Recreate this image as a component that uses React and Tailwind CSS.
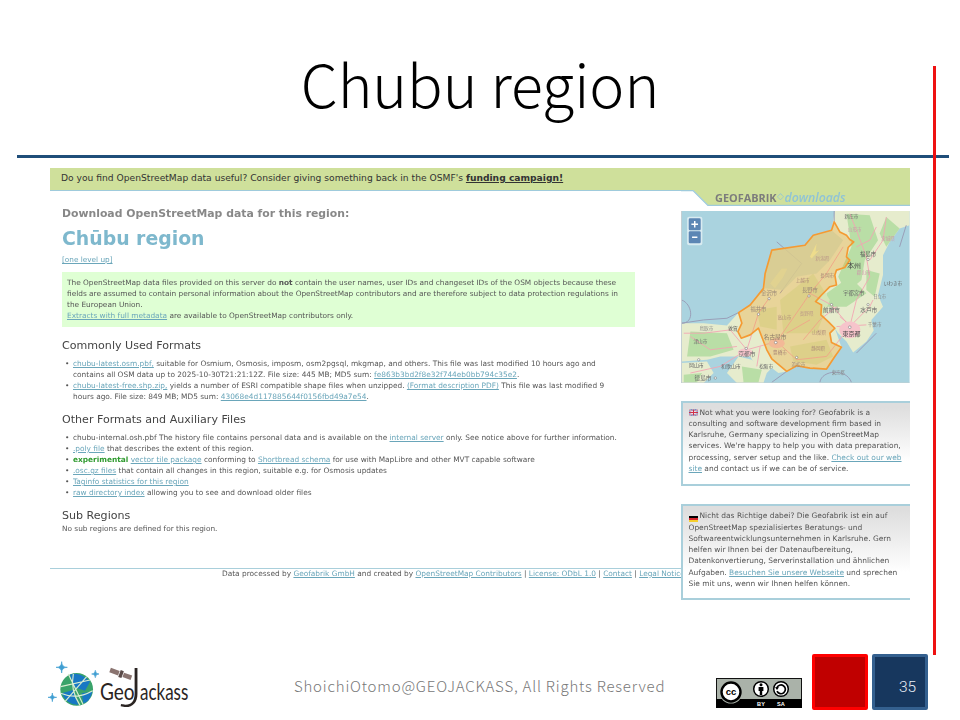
import React from 'react';

const Link = ({ children }) => <span className="text-[#6aa6ba] underline">{children}</span>;

const BORDER = '493,185 510,215 530,225 540,238 552,245 535,262 530,290 540,300 525,322 500,330 495,345 500,375 480,380 455,405 437,425 455,435 453,465 475,485 495,505 480,520 485,548 515,562 495,590 470,628 420,625 380,618 350,635 305,597 290,570 265,505 240,525 213,535 203,515 215,490 205,458 240,435 280,385 285,340 305,270 405,255 430,225 485,210';

const mapLabels = [
  ['福島市', 595, 284, 16, '#555'],
  ['本州', 553, 319, 21, '#444'],
  ['新潟県', 458, 295, 14, '#b98'],
  ['長岡市', 472, 347, 14, '#a87'],
  ['宇都宮市', 552, 401, 16, '#666'],
  ['いわき市', 670, 371, 14, '#666'],
  ['郡山市', 582, 339, 14, '#c9a'],
  ['上越市', 398, 362, 14, '#a87'],
  ['長野市', 420, 391, 16, '#987'],
  ['金沢市', 297, 400, 16, '#987'],
  ['福井市', 265, 450, 16, '#987'],
  ['高山市', 343, 474, 14, '#a87'],
  ['長野県', 410, 461, 14, '#b98'],
  ['前橋市', 485, 453, 17, '#666'],
  ['水戸市', 597, 453, 17, '#666'],
  ['山梨県', 448, 520, 14, '#a87'],
  ['東京都', 545, 523, 18, '#444'],
  ['千葉市', 615, 494, 14, '#888'],
  ['名古屋市', 315, 533, 17, '#876'],
  ['静岡県', 445, 566, 14, '#a87'],
  ['豊橋市', 330, 580, 14, '#a87'],
  ['浜松市', 385, 614, 14, '#987'],
  ['京都市', 230, 585, 17, '#666'],
  ['敦賀', 188, 508, 14, '#555'],
  ['鳥取市', 108, 506, 14, '#888'],
  ['津山市', 90, 546, 14, '#666'],
  ['岡山市', 78, 618, 15, '#666'],
  ['和歌山市', 182, 621, 15, '#666'],
  ['松阪市', 288, 621, 14, '#666'],
  ['徳島市', 98, 656, 17, '#666'],
  ['東京都', 505, 639, 13, '#888'],
  ['山形市', 555, 208, 14, '#c9a'],
  ['新庄市', 545, 168, 14, '#666'],
  ['宮城県', 655, 236, 14, '#c9a'],
  ['日立市', 630, 411, 13, '#888'],
];

const roads = [
  'M540 160 L560 210 L590 290 L600 350 L560 420 L540 500',
  'M650 170 L640 240 L600 300',
  'M540 500 L600 440 L610 420',
  'M540 500 L485 435 L420 400 L400 430 L320 545',
  'M320 545 L230 570 L150 620 L60 640',
  'M320 545 L380 600 L470 590 L540 500',
  'M230 570 L180 510 L100 520 L40 520',
  'M420 400 L470 340 L520 260',
  'M300 410 L265 460 L230 570',
  'M510 470 L570 520 M500 500 L590 495',
  'M620 200 L600 240 L560 260 M500 440 L450 480 L400 540',
  'M60 530 L120 570 L200 560 M270 560 L260 620 M350 520 L420 480',
];

const ChubuMap = () => (
  <svg viewBox="33 152 687 518" className="block w-[229px] h-[172px]" style={{ fontFamily: '"Noto Sans CJK JP", sans-serif' }}>
    <rect x="33" y="152" width="687" height="518" fill="#aad3df" />
    <path d="M495 152 L720 152 L720 195 L690 205 L660 245 L640 285 L640 345 L625 405 L640 440 L605 480 L612 512 L590 545 L550 578 L530 545 L505 520 L495 505 L515 562 L495 590 L470 628 L420 625 L380 618 L350 635 L325 640 L305 625 L290 640 L270 640 L240 590 L200 590 L150 590 L110 600 L33 605 L33 490 L100 490 L170 497 L205 458 L240 435 L280 385 L285 340 L305 270 L405 255 L430 225 L485 210 Z" fill="#e6eccd" />
    <path d="M33 610 L110 605 L130 640 L100 670 L33 670 Z" fill="#e6eccd" />
    <path d="M205 590 L245 600 L290 640 L280 670 L200 670 L170 640 Z" fill="#e6eccd" />
    <g fill="#b9dea6">
      <path d="M530 160 L600 165 L625 240 L585 300 L575 360 L530 400 L505 350 L545 260 Z" />
      <path d="M650 170 L690 205 L650 260 L630 220 Z" />
      <path d="M590 330 L630 340 L615 410 L590 390 Z" />
      <path d="M60 515 L170 520 L190 570 L120 590 L50 590 Z" />
      <path d="M215 620 L275 630 L265 668 L220 668 Z" />
      <path d="M40 645 L95 640 L80 668 L40 668 Z" />
      <path d="M470 400 L540 350 L590 400 L530 440 L470 440 Z" />
    </g>
    <g fill="#d6e6b6">
      <path d="M330 420 L430 340 L480 420 L440 520 L340 520 Z" />
      <path d="M260 450 L320 440 L320 510 L270 500 Z" />
      <path d="M360 560 L470 540 L490 590 L440 615 L370 605 Z" />
    </g>
    <g fill="none" stroke="#f3a3b3" strokeWidth="2.6">
      {roads.map((d) => <path key={d} d={d} />)}
    </g>
    <g fill="#f6c4cb">
      <ellipse cx="540" cy="510" rx="32" ry="25" />
      <ellipse cx="320" cy="550" rx="24" ry="15" />
      <ellipse cx="225" cy="578" rx="22" ry="12" />
    </g>
    <path d="M493 152 L493 185 M710 195 L690 260 M33 490 C75 490 65 430 33 420 M33 490 L100 480 L170 475 L205 458 M305 668 L350 635 M450 668 C455 630 530 625 545 668 M560 580 L620 520 M320 245 L395 310 L330 400" fill="none" stroke="#9a9fb8" strokeWidth="3" />
    <polygon points={BORDER} fill="#eda12c" fillOpacity="0.32" />
    <path d="M305 270 L405 255 L430 225 L485 210 L520 240 L480 300 L440 340 L380 350 L340 390 L285 385 L285 340 Z" fill="#d6cb93" opacity="0.85" />
    <polygon points={BORDER} fill="none" stroke="#f59a32" strokeWidth="5" strokeLinejoin="round" />
    <path d="M420 290 L440 250 L437 275 L448 270 L425 295 Z" fill="#f2e08a" opacity="0.8" />
    <path d="M300 370 L335 325 L352 325 L340 350 L315 385 Z" fill="#e6d58e" opacity="0.6" />
    {mapLabels.map(([label, x, y, size, color]) => (
      <text key={label + x} x={x} y={y} fontSize={size} fill={color} textAnchor="middle" dominantBaseline="middle">{label}</text>
    ))}
    <g fill="#fff" stroke="#666" strokeWidth="1.5">
      <circle cx="595" cy="298" r="3.5" />
      <circle cx="417" cy="408" r="3.5" />
      <circle cx="485" cy="434" r="3.5" />
      <circle cx="595" cy="434" r="3.5" />
      <circle cx="297" cy="416" r="3.5" />
      <circle cx="265" cy="463" r="3.5" />
      <circle cx="317" cy="548" r="4" />
      <circle cx="228" cy="566" r="3.5" />
      <circle cx="540" cy="502" r="4" />
      <circle cx="85" cy="600" r="3.5" />
      <circle cx="135" cy="655" r="3.5" />
      <circle cx="380" cy="593" r="3.5" />
    </g>
    <path d="M33 152 V670 H720" fill="none" stroke="#c4cfd2" strokeWidth="3" />
    <rect x="50" y="169" width="46" height="86" rx="6" fill="#fff" fillOpacity="0.55" />
    <rect x="55" y="174" width="36" height="36" rx="4" fill="#5c86b4" />
    <rect x="55" y="213" width="36" height="36" rx="4" fill="#5c86b4" />
    <path d="M73 182 V202 M63 192 H83 M65 231 H81" stroke="#fff" strokeWidth="4.5" />
  </svg>
);

const UkFlag = () => (
  <svg viewBox="0 0 18 12" className="inline-block w-[9px] h-[7px] mr-[2px] align-[-0.5px]">
    <rect width="18" height="12" fill="#2c3f93" />
    <path d="M0 0 L18 12 M18 0 L0 12" stroke="#fff" strokeWidth="2.6" />
    <path d="M0 0 L18 12 M18 0 L0 12" stroke="#d0304a" strokeWidth="1" />
    <path d="M9 0 V12 M0 6 H18" stroke="#fff" strokeWidth="4" />
    <path d="M9 0 V12 M0 6 H18" stroke="#d0304a" strokeWidth="2.2" />
  </svg>
);

const DeFlag = () => (
  <span className="inline-flex flex-col w-[9px] h-[6px] mr-[2px] align-[0px]">
    <span className="h-[2px] bg-black" />
    <span className="h-[2px] bg-[#d9262c]" />
    <span className="h-[2px] bg-[#f5cf2e]" />
  </span>
);

const SideBox = ({ className, children }) => (
  <div className={`border-y-2 border-l-2 border-[#a9cfdb] pl-[5.5px] pt-[4px] text-[7.47px] leading-[11.15px] whitespace-nowrap bg-gradient-to-b from-[#dedede] from-[5%] to-white to-[72%] ${className}`}>
    {children}
  </div>
);

const Item = ({ children }) => (
  <li className="flex">
    <span className="w-[11px] pl-[3px] shrink-0">•</span>
    <span>{children}</span>
  </li>
);

const WebPage = () => (
  <div className="w-[860px] ml-[50px] mt-[10px] blur-[0.3px] text-[#555]" style={{ fontFamily: '"DejaVu Sans", Verdana, sans-serif' }}>
    <div className="h-[22px] bg-[#cfe09b] pl-[11px] text-[9.17px] leading-[19px] text-[#333] whitespace-nowrap">
      Do you find OpenStreetMap data useful? Consider giving something back in the OSMF's <span className="font-bold underline">funding campaign!</span>
    </div>
    <div className="flex">
      <div className="w-[631px] overflow-hidden border-t-[1.5px] border-[#9fcbdc] pt-[15.5px]">
        <div className="pl-[12px] whitespace-nowrap">
          <h3 className="text-[10.85px] leading-[14px] font-bold text-[#888]">Download OpenStreetMap data for this region:</h3>
          <h1 className="mt-[6px] text-[18.85px] leading-[24px] font-bold text-[#7eb8cd]">Chūbu region</h1>
          <div className="mt-[4px] text-[7.3px] leading-[10px]"><Link>[one level up]</Link></div>
          <div className="mt-[7px] w-[573px] h-[55px] bg-[#dfffd4] pl-[5px] pt-[5px] text-[7.39px] leading-[11.15px]">
            The OpenStreetMap data files provided on this server do <b>not</b> contain the user names, user IDs and changeset IDs of the OSM objects because these<br />
            fields are assumed to contain personal information about the OpenStreetMap contributors and are therefore subject to data protection regulations in<br />
            the European Union.<br />
            <Link>Extracts with full metadata</Link> are available to OpenStreetMap contributors only.
          </div>
          <h2 className="mt-[12px] text-[11.08px] leading-[14px] text-[#444]">Commonly Used Formats</h2>
          <ul className="mt-[5.5px] text-[7.4px] leading-[11px]">
            <Item>
              <Link>chubu-latest.osm.pbf,</Link> suitable for Osmium, Osmosis, imposm, osm2pgsql, mkgmap, and others. This file was last modified 10 hours ago and<br />
              contains all OSM data up to 2025-10-30T21:21:12Z. File size: 445 MB; MD5 sum: <Link>fe863b3bd2f8e32f744eb0bb794c35e2</Link>.
            </Item>
            <Item>
              <span>
                <Link>chubu-latest-free.shp.zip,</Link> yields a number of ESRI compatible shape files when unzipped. <Link>(Format description PDF)</Link> This file was last modified 9<br />
                hours ago. File size: 849 MB; MD5 sum: <Link>43068e4d117885644f0156fbd49a7e54</Link>.
              </span>
            </Item>
          </ul>
          <h2 className="mt-[10.5px] text-[11.08px] leading-[14px] text-[#444]">Other Formats and Auxiliary Files</h2>
          <ul className="mt-[5.5px] text-[7.4px] leading-[11px]">
            <Item>chubu-internal.osh.pbf The history file contains personal data and is available on the <Link>internal server</Link> only. See notice above for further information.</Item>
            <Item><span><Link>.poly file</Link> that describes the extent of this region.</span></Item>
            <Item><span><span className="text-[#2f9a2f] font-bold">experimental</span> <Link>vector tile package</Link> conforming to <Link>Shortbread schema</Link> for use with MapLibre and other MVT capable software</span></Item>
            <Item><span><Link>.osc.gz files</Link> that contain all changes in this region, suitable e.g. for Osmosis updates</span></Item>
            <Item><Link>Taginfo statistics for this region</Link></Item>
            <Item><span><Link>raw directory index</Link> allowing you to see and download older files</span></Item>
          </ul>
          <h2 className="mt-[11.5px] text-[11.08px] leading-[12px] text-[#444]">Sub Regions</h2>
          <p className="mt-[1px] text-[7.37px] leading-[11px]">No sub regions are defined for this region.</p>
        </div>
        <div className="mt-[34px] border-t-[1.5px] border-[#a9cfdb] pl-[172px] text-[7.4px] leading-[10px] whitespace-nowrap">
          Data processed by <Link>Geofabrik GmbH</Link> and created by <Link>OpenStreetMap Contributors</Link> | <Link>License: ODbL 1.0</Link> | <Link>Contact</Link> | <Link>Legal Notice</Link>
        </div>
      </div>
      <div className="w-[229px]">
        <div className="relative h-[16px]">
          <svg viewBox="0 0 229 16" className="absolute inset-0 w-[229px] h-[16px]">
            <path d="M0 0 H229 V15 H27 L12 0 Z" fill="#cfe09b" />
            <path d="M0 0.5 H12 L27 15.5 H229" fill="none" stroke="#9fcbdc" strokeWidth="1.3" />
          </svg>
          <div className="relative pl-[34px] text-[10.9px] leading-[11px] whitespace-nowrap" style={{ fontFamily: '"Open Sans", sans-serif' }}>
            <span className="font-bold text-[#7c7c7c]">GEOFABRIK</span>
            <span className="mr-[1px] text-[#8fc3d6] text-[9px] align-[3px]">◇</span>
            <i className="text-[#8fc3d6] font-semibold text-[12.3px]">downloads</i>
          </div>
        </div>
        <div className="mt-[5px]"><ChubuMap /></div>
        <SideBox className="mt-[18px] h-[85px]">
          <UkFlag />Not what you were looking for? Geofabrik is a<br />
          consulting and software development firm based in<br />
          Karlsruhe, Germany specializing in OpenStreetMap<br />
          services. We're happy to help you with data preparation,<br />
          processing, server setup and the like. <Link>Check out our web</Link><br />
          <Link>site</Link> and contact us if we can be of service.
        </SideBox>
        <SideBox className="mt-[18px] h-[96px]">
          <DeFlag />Nicht das Richtige dabei? Die Geofabrik ist ein auf<br />
          OpenStreetMap spezialisiertes Beratungs- und<br />
          Softwareentwicklungsunternehmen in Karlsruhe. Gern<br />
          helfen wir Ihnen bei der Datenaufbereitung,<br />
          Datenkonvertierung, Serverinstallation und ähnlichen<br />
          Aufgaben. <Link>Besuchen Sie unsere Webseite</Link> und sprechen<br />
          Sie mit uns, wenn wir Ihnen helfen können.
        </SideBox>
      </div>
    </div>
  </div>
);

const Star = ({ x, y, r }) => (
  <path d={`M${x} ${y - r} Q${x} ${y} ${x + r} ${y} Q${x} ${y} ${x} ${y + r} Q${x} ${y} ${x - r} ${y} Q${x} ${y} ${x} ${y - r} Z`} fill="#3f9ed2" stroke="#3f9ed2" strokeWidth="2" />
);

const Logo = () => (
  <svg viewBox="24 12 426 168" className="w-[142px] h-[56px] shrink-0">
    <Star x={65} y={52} r={17} />
    <Star x={166} y={72} r={11} />
    <Star x={37} y={142} r={13} />
    <circle cx="110" cy="118" r="49" fill="#3aa36a" />
    <path d="M90 74 Q120 64 150 95 L135 122 L100 110 Z M65 130 L100 120 L115 165 Q80 165 65 130 Z M125 130 L157 125 Q150 155 130 160 Z" fill="#1878c4" />
    <path d="M62 110 L150 90 M85 72 L130 165 M140 80 L75 155 M62 130 Q110 150 158 122 M100 72 Q90 120 120 166" fill="none" stroke="#d8ecd0" strokeWidth="3.5" />
    <g transform="rotate(20 240 72)">
      <rect x="208" y="64" width="28" height="14" fill="#8a7470" />
      <rect x="238" y="60" width="10" height="22" fill="#5a4a48" />
      <rect x="250" y="64" width="26" height="14" fill="#8a7470" />
    </g>
    <g fill="#2a2422" style={{ fontFamily: 'Lato, sans-serif' }}>
      <text x="180" y="150" fontSize="70" fontWeight="400" textLength="104" lengthAdjust="spacingAndGlyphs">Geo</text>
      <text x="240" y="172" fontSize="165" fontWeight="300">J</text>
      <text x="300" y="150" fontSize="68" fontWeight="400" textLength="145" lengthAdjust="spacingAndGlyphs">ackass</text>
    </g>
  </svg>
);

const CcBadge = () => (
  <svg viewBox="0 0 86 30" className="w-[86px] h-[30px] ml-[51px] shrink-0 self-end mb-[2px]">
    <rect x="0.5" y="0.5" width="85" height="29" fill="#aab2a9" stroke="#111" />
    <rect x="0" y="21" width="86" height="9" fill="#000" />
    <circle cx="15" cy="14" r="11.5" fill="#aab2a9" />
    <circle cx="15" cy="14" r="9.5" fill="#fff" stroke="#000" strokeWidth="2.4" />
    <text x="15" y="17.2" fontSize="9.5" fontWeight="700" textAnchor="middle" fill="#000" style={{ fontFamily: '"Liberation Sans", sans-serif' }}>cc</text>
    <circle cx="45" cy="11" r="7.3" fill="#fff" stroke="#000" strokeWidth="1.5" />
    <circle cx="45" cy="6.8" r="1.5" fill="#000" />
    <path d="M42.6 9 H47.4 V13 H46.2 V17 H43.8 V13 H42.6 Z" fill="#000" />
    <circle cx="65" cy="11" r="7.3" fill="#fff" stroke="#000" strokeWidth="1.5" />
    <path d="M60.8 10 A4.4 4.4 0 1 1 61 13.2" fill="none" stroke="#000" strokeWidth="1.7" />
    <path d="M59 9.3 L63 9.3 L61 12 Z" fill="#000" />
    <text x="45" y="28.4" fontSize="5.6" fontWeight="700" textAnchor="middle" fill="#fff" style={{ fontFamily: '"Liberation Sans", sans-serif' }}>BY</text>
    <text x="65" y="28.4" fontSize="5.6" fontWeight="700" textAnchor="middle" fill="#fff" style={{ fontFamily: '"Liberation Sans", sans-serif' }}>SA</text>
  </svg>
);

export default function App() {
  return (
    <div className="relative w-[960px] h-[720px] overflow-hidden bg-white flex flex-col">
      <div className="absolute left-[933px] top-[66px] w-[3px] h-[589px] bg-[#ee1111]" />
      <h1 className="h-[155px] pt-[45px] text-center text-[59px] leading-[76px] font-light text-black" style={{ fontFamily: '"Noto Sans CJK JP", sans-serif' }}>
        Chubu region
      </h1>
      <div className="mx-[17px] w-[932px] h-[3px] bg-[#1f4e79] shrink-0" />
      <div className="flex-1 min-h-0">
        <WebPage />
      </div>
      <div className="flex items-center h-[56px] mb-[10px] pl-[48px] shrink-0">
        <Logo />
        <div className="ml-[104px] w-[371px] text-[15px] tracking-[0.8px] font-light text-[#777] whitespace-nowrap mt-[8px]" style={{ fontFamily: '"Noto Sans CJK JP", sans-serif' }}>
          ShoichiOtomo@GEOJACKASS, All Rights Reserved
        </div>
        <CcBadge />
        <div className="ml-[10px] w-[56px] h-[56px] rounded-[2px] border-[3px] border-[#ff0000] bg-[#c00000] shrink-0" />
        <div className="ml-[4px] w-[56px] h-[56px] rounded-[2px] border-[3px] border-[#34608f] bg-[#17375e] shrink-0 pl-[24px] pt-[20px] text-[15.5px] leading-[20px] font-light text-[#e8eef5]" style={{ fontFamily: 'Roboto, sans-serif' }}>
          35
        </div>
      </div>
    </div>
  );
}
